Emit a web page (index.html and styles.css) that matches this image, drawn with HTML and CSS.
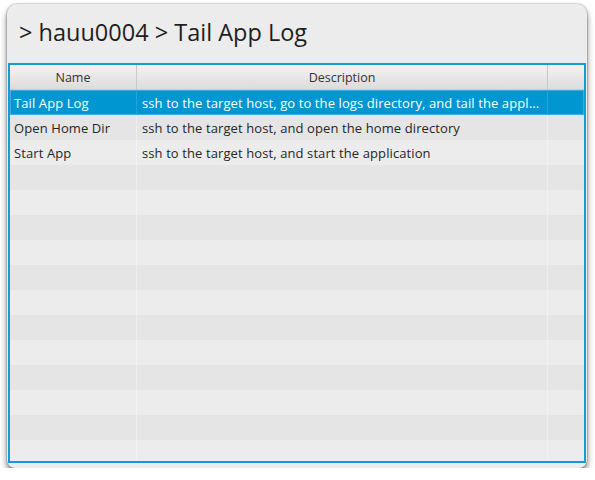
FILE: index.html
```html
<!DOCTYPE html>
<html>
<head>
<meta charset="utf-8">
<link rel="stylesheet" href="styles.css">
</head>
<body>
<div class="window">
  <div class="titlebar"><span class="title">&gt; hauu0004 &gt; Tail App Log</span></div>
  <div class="table">
    <div class="row header">
      <div class="cell c-name">Name</div>
      <div class="cell c-desc">Description</div>
      <div class="cell c-fill"></div>
    </div>
    <div class="row selected">
      <div class="cell c-name">Tail App Log</div>
      <div class="cell c-desc">ssh to the target host, go to the logs directory, and tail the appl...</div>
      <div class="cell c-fill"></div>
    </div>
    <div class="row odd">
      <div class="cell c-name">Open Home Dir</div>
      <div class="cell c-desc">ssh to the target host, and open the home directory</div>
      <div class="cell c-fill"></div>
    </div>
    <div class="row even">
      <div class="cell c-name">Start App</div>
      <div class="cell c-desc">ssh to the target host, and start the application</div>
      <div class="cell c-fill"></div>
    </div>
    <div class="row odd"><div class="cell c-name"></div><div class="cell c-desc"></div><div class="cell c-fill"></div></div>
    <div class="row even"><div class="cell c-name"></div><div class="cell c-desc"></div><div class="cell c-fill"></div></div>
    <div class="row odd"><div class="cell c-name"></div><div class="cell c-desc"></div><div class="cell c-fill"></div></div>
    <div class="row even"><div class="cell c-name"></div><div class="cell c-desc"></div><div class="cell c-fill"></div></div>
    <div class="row odd"><div class="cell c-name"></div><div class="cell c-desc"></div><div class="cell c-fill"></div></div>
    <div class="row even"><div class="cell c-name"></div><div class="cell c-desc"></div><div class="cell c-fill"></div></div>
    <div class="row odd"><div class="cell c-name"></div><div class="cell c-desc"></div><div class="cell c-fill"></div></div>
    <div class="row even"><div class="cell c-name"></div><div class="cell c-desc"></div><div class="cell c-fill"></div></div>
    <div class="row odd"><div class="cell c-name"></div><div class="cell c-desc"></div><div class="cell c-fill"></div></div>
    <div class="row even"><div class="cell c-name"></div><div class="cell c-desc"></div><div class="cell c-fill"></div></div>
    <div class="row odd"><div class="cell c-name"></div><div class="cell c-desc"></div><div class="cell c-fill"></div></div>
    <div class="row even"><div class="cell c-name"></div><div class="cell c-desc"></div><div class="cell c-fill"></div></div>
  </div>
</div>
</body>
</html>
```
FILE: styles.css
```css
html, body {
  margin: 0;
  padding: 0;
  background: #ffffff;
}
body {
  padding: 4px 0 0 7px;
  font-family: "Open Sans", "Liberation Sans", sans-serif;
}
.window {
  width: 580px;
  height: 464px;
  box-sizing: border-box;
  background: #ececec;
  border-radius: 10px 10px 8px 8px;
  box-shadow: 0 0 0 1px rgba(0,0,0,0.12), 0 4px 6px rgba(0,0,0,0.55);
  display: flex;
  flex-direction: column;
  padding: 0 1px 5px 1px;
  overflow: hidden;
}
.titlebar {
  height: 59px;
  flex: none;
  display: flex;
  align-items: flex-start;
  padding-left: 11px;
}
.title {
  font-size: 23.5px;
  color: #1e1e1e;
  line-height: 28px;
  margin-top: 14px;
}
.table {
  flex: 1;
  border: 2px solid #119dd8;
  background: #ececec;
  overflow: hidden;
  display: flex;
  flex-direction: column;
}
.row {
  display: flex;
  height: 25px;
  flex: none;
  font-size: 13px;
  letter-spacing: 0.1px;
  color: #262626;
}
.cell {
  box-sizing: border-box;
  height: 100%;
  display: flex;
  align-items: center;
  white-space: nowrap;
  overflow: hidden;
  border-right: 1px solid rgba(255,255,255,0.35);
}
.c-name { width: 127px; padding-left: 4px; }
.c-desc { width: 411px; padding-left: 5px; }
.c-fill { flex: 1; border-right: none; }
.header {
  height: 24px;
  background: linear-gradient(#f3f3f3, #dcdcdc);
  border-bottom: 1px solid #c9c9c9;
  font-size: 12.5px;
  letter-spacing: 0;
  color: #333;
}
.header .cell {
  justify-content: center;
  padding-left: 0;
  border-right: 1px solid #c8c8c8;
}
.header .c-fill { border-right: none; }
.selected {
  background: #0096d1;
  color: #ffffff;
  box-shadow: inset 0 0 0 1px #3eaee0;
}
.selected .cell { border-right: 1px solid #27a2da; }
.selected .c-fill { border-right: none; }
.even { background: #ececec; }
.odd { background: #e5e5e5; }
.odd .cell { border-right-color: #eeeeee; }
.odd .c-fill { border-right: none; }
```
